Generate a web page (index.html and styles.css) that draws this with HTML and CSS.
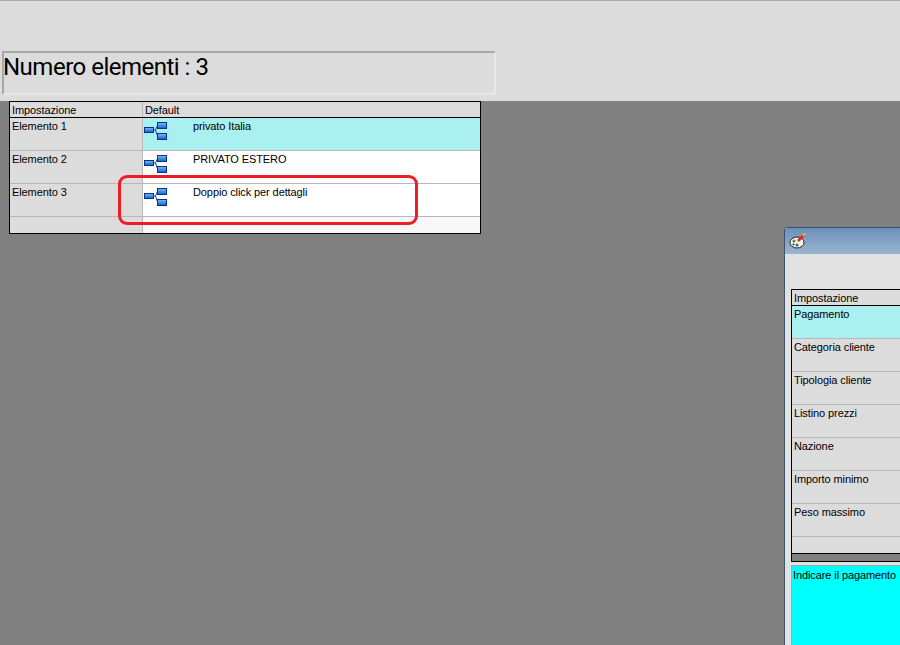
FILE: index.html
```html
<!DOCTYPE html>
<html lang="it">
<head>
  <meta charset="UTF-8" />
  <title>Numero elementi</title>
  <link rel="stylesheet" href="styles.css">
</head>
<body>
  <svg class="defs" width="0" height="0">
    <defs>
      <linearGradient id="boxFill" x1="0" y1="0" x2="0" y2="1">
        <stop offset="0" stop-color="#7cc0f0" />
        <stop offset="1" stop-color="#0a62c8" />
      </linearGradient>
      <g id="treeIcon">
        <path d="M10 8 H11.5 L13 4.5 L14 3.5 M11.5 8 L13 12.5 L14 14" fill="none" stroke="#27408f" stroke-width="1" />
        <rect x="0.5" y="5.5" width="9" height="5" fill="url(#boxFill)" stroke="#0b2f8c" />
        <rect x="13.5" y="0.5" width="9" height="6" fill="url(#boxFill)" stroke="#0b2f8c" />
        <rect x="13.5" y="11.5" width="9" height="6" fill="url(#boxFill)" stroke="#0b2f8c" />
      </g>
    </defs>
  </svg>

  <div class="top">
    <div class="counter">Numero elementi : 3</div>
  </div>

  <div class="desktop">
    <div class="grid">
      <div class="grid-head">
        <div class="col-a">Impostazione</div>
        <div class="col-b">Default</div>
      </div>
      <div class="grid-row selected">
        <div class="col-a">Elemento 1</div>
        <div class="col-b">
          <svg class="tree" width="23" height="18"><use href="#treeIcon" /></svg>
          <span class="value">privato Italia</span>
        </div>
      </div>
      <div class="grid-row">
        <div class="col-a">Elemento 2</div>
        <div class="col-b">
          <svg class="tree" width="23" height="18"><use href="#treeIcon" /></svg>
          <span class="value">PRIVATO ESTERO</span>
        </div>
      </div>
      <div class="grid-row">
        <div class="col-a">Elemento 3</div>
        <div class="col-b">
          <svg class="tree" width="23" height="18"><use href="#treeIcon" /></svg>
          <span class="value">Doppio click per dettagli</span>
        </div>
      </div>
      <div class="grid-end">
        <div class="col-a"></div>
        <div class="col-b"></div>
      </div>
    </div>

    <div class="highlight"></div>

    <div class="window">
      <div class="titlebar">
        <svg width="17" height="16" viewBox="0 0 17 16">
          <ellipse cx="8" cy="9.5" rx="7" ry="5.5" fill="#f4f0e4" stroke="#222" />
          <circle cx="5" cy="8" r="1.5" fill="#2f9e2f" />
          <circle cx="8" cy="12" r="1.5" fill="#2f62c8" />
          <circle cx="4.5" cy="11.5" r="1" fill="#333" />
          <path d="M9 8 L15 2" stroke="#e02020" stroke-width="2.5" />
          <path d="M14 3 L16 0" stroke="#f0c020" stroke-width="2" />
        </svg>
      </div>
      <div class="window-body">
        <div class="props">
          <div class="props-head">Impostazione</div>
          <div class="props-row selected">Pagamento</div>
          <div class="props-row">Categoria cliente</div>
          <div class="props-row">Tipologia cliente</div>
          <div class="props-row">Listino prezzi</div>
          <div class="props-row">Nazione</div>
          <div class="props-row">Importo minimo</div>
          <div class="props-row">Peso massimo</div>
          <div class="props-end"></div>
          <div class="props-scroll"></div>
        </div>
        <div class="hint">Indicare il pagamento</div>
      </div>
    </div>
  </div>
</body>
</html>
```

FILE: styles.css
```css
html, body {
  margin: 0;
  padding: 0;
  height: 645px;
  overflow: hidden;
}
body {
  display: flex;
  flex-direction: column;
  background: #808080;
  color: #000;
  font-family: "Liberation Sans", Arial, sans-serif;
  font-size: 11px;
  line-height: 14px;
  letter-spacing: -0.1px;
}
.defs {
  position: absolute;
}
.top {
  height: 101px;
  box-sizing: border-box;
  flex: none;
  padding: 50px 0 0 2px;
  background: #dcdcdc;
  border-top: 1px solid #a8a8a8;
}
.counter {
  width: 494px;
  height: 44px;
  box-sizing: border-box;
  border: 2px solid;
  border-color: #a8a8a8 #e8e8e8 #e8e8e8 #a8a8a8;
  font-family: Roboto, sans-serif;
  font-size: 24px;
  line-height: 28px;
  letter-spacing: -0.5px;
  text-indent: -1px;
}
.desktop {
  position: relative;
  flex: 1;
  padding-left: 9px;
}

/* griglia principale */
.grid {
  width: 472px;
  box-sizing: border-box;
  border: 1px solid #000;
  background: #dcdcdc;
}
.grid-head {
  display: flex;
  height: 16px;
  box-sizing: border-box;
  border-bottom: 1px solid #000;
}
.grid-row {
  display: flex;
  height: 33px;
  box-sizing: border-box;
  border-bottom: 1px solid #b8b8b8;
  background: #fff;
}
.grid-end {
  display: flex;
  height: 16px;
  background: #f8f8f8;
}
.col-a {
  width: 133px;
  flex: none;
  box-sizing: border-box;
  padding: 1px 0 0 2px;
  background: #dcdcdc;
  border-right: 1px solid #b8b8b8;
}
.col-b {
  flex: 1;
  display: flex;
  align-items: flex-start;
  padding: 1px 0 0 1px;
}
.grid-head .col-b {
  background: #dcdcdc;
  padding-left: 2px;
}
.grid-row.selected {
  background: #aaf0f0;
}
.tree {
  flex: none;
  margin-top: 3px;
}
.value {
  margin-left: 26px;
  white-space: nowrap;
}

/* evidenziazione rossa */
.highlight {
  position: absolute;
  left: 118px;
  top: 74px;
  width: 294px;
  height: 44px;
  border: 3px solid #ee1c25;
  border-radius: 9px;
}

/* finestra sovrapposta */
.window {
  position: absolute;
  left: 784px;
  top: 126px;
  right: 0;
  bottom: 0;
  border: 1px solid #3f5468;
  border-right: 0;
  border-bottom: 0;
  border-radius: 4px 0 0 0;
  display: flex;
  flex-direction: column;
}
.titlebar {
  height: 26px;
  flex: none;
  display: flex;
  align-items: center;
  padding-left: 4px;
  background: linear-gradient(180deg, #6b90bb, #9ab5d0);
}
.window-body {
  flex: 1;
  min-width: 0;
  background: #e2e2e2;
  padding: 35px 0 0 6px;
  display: flex;
  flex-direction: column;
  gap: 3px;
}
.props {
  border: 1px solid #000;
  border-right: 0;
  background: #dcdcdc;
}
.props-head {
  height: 14px;
  padding: 1px 0 0 2px;
  border-bottom: 1px solid #000;
}
.props-row {
  height: 31px;
  padding: 1px 0 0 2px;
  border-bottom: 1px solid #b8b8b8;
}
.props-row.selected {
  background: #aaf0f0;
}
.props-end {
  height: 16px;
  border-bottom: 1px solid #000;
}
.props-scroll {
  height: 7px;
  background: #808080;
}
.hint {
  flex: 1;
  padding: 2px 0 0 1px;
  background: #00ffff;
  border-top: 1px solid #a8a8a8;
  border-left: 1px solid #a8a8a8;
  white-space: nowrap;
}
```
